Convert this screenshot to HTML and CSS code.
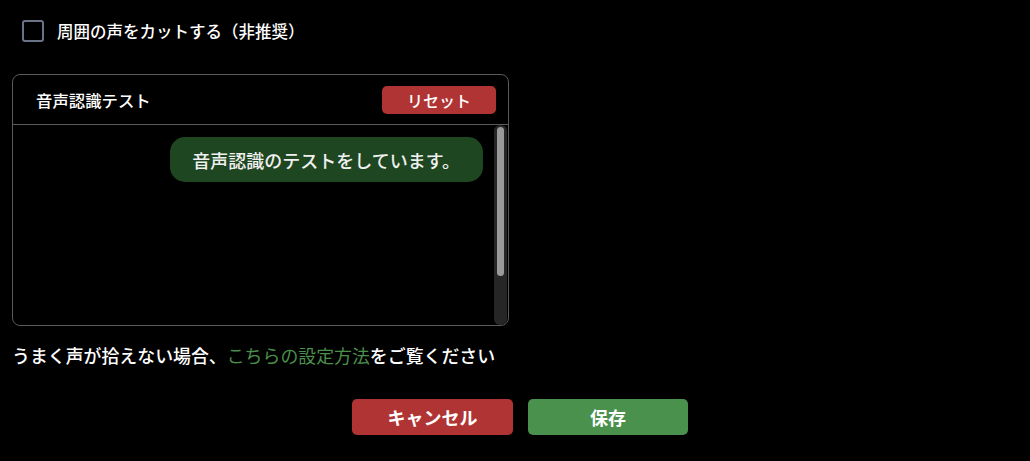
FILE: index.html
```html
<!DOCTYPE html>
<html lang="ja">
<head>
<meta charset="utf-8">
<link rel="stylesheet" href="styles.css">
</head>
<body>
<div class="page">
  <label class="check-row">
    <span class="checkbox"></span>
    <span class="check-label">周囲の声をカットする（非推奨）</span>
  </label>

  <section class="panel">
    <div class="panel-head">
      <span class="panel-title">音声認識テスト</span>
      <button class="btn-reset">リセット</button>
    </div>
    <div class="panel-body">
      <div class="messages">
        <div class="bubble">音声認識のテストをしています。</div>
      </div>
      <div class="scrollbar"><div class="thumb"></div></div>
    </div>
  </section>

  <p class="help">うまく声が拾えない場合、<a class="link">こちらの設定方法</a>をご覧ください</p>

  <div class="actions">
    <button class="btn btn-cancel">キャンセル</button>
    <button class="btn btn-save">保存</button>
  </div>
</div>
</body>
</html>
```

FILE: styles.css
```css
* { box-sizing: border-box; }
html, body {
  margin: 0;
  background: #000;
  color: #fff;
  font-family: "Noto Sans CJK JP", "Noto Sans", sans-serif;
}
.page {
  width: 1030px;
  height: 461px;
  padding: 19px 2px 0 12px;
}
.check-row {
  display: flex;
  align-items: center;
  gap: 13px;
  padding-left: 10px;
  height: 24px;
}
.checkbox {
  width: 22px;
  height: 22px;
  border: 2px solid #6b7388;
  border-radius: 3px;
}
.check-label {
  font-size: 16.5px;
  font-weight: 500;
  line-height: 24px;
}
.panel {
  margin-top: 31px;
  width: 497px;
  height: 252px;
  border: 1px solid #5a5a5a;
  border-radius: 8px;
  display: flex;
  flex-direction: column;
  overflow: hidden;
}
.panel-head {
  height: 50px;
  flex: none;
  display: flex;
  align-items: center;
  justify-content: space-between;
  padding: 0 12px 0 23px;
  border-bottom: 1px solid #5a5a5a;
}
.panel-title {
  font-size: 16.4px;
  font-weight: 500;
}
.btn-reset {
  width: 114px;
  height: 28px;
  border: none;
  border-radius: 5px;
  background: #b03434;
  color: #fff;
  font-family: inherit;
  font-size: 16px;
  font-weight: 500;
  padding: 0;
  margin-top: 1px;
}
.panel-body {
  flex: 1;
  display: flex;
}
.messages {
  flex: 1;
  display: flex;
  justify-content: flex-end;
  align-items: flex-start;
  padding: 12px 11px 0 0;
}
.bubble {
  background: #1e4620;
  border-radius: 15px;
  height: 45px;
  padding: 0 23px 0 22px;
  display: flex;
  align-items: center;
  font-size: 18px;
  font-weight: 500;
  color: #f0f0f0;
}
.scrollbar {
  width: 13px;
  margin: 0 1px 0 0;
  background: #262626;
  border-radius: 6px;
  padding: 2px 3px;
}
.thumb {
  height: 149px;
  background: #9a9a9a;
  border-radius: 4px;
}
.help {
  margin: 16px 0 0 0;
  font-size: 17.9px;
  font-weight: 500;
  line-height: 26px;
}
.link {
  color: #4a8f4c;
  font-weight: 400;
}
.actions {
  margin-top: 31px;
  display: flex;
  justify-content: center;
  gap: 15px;
}
.btn {
  width: 161px;
  height: 36px;
  border: none;
  border-radius: 5px;
  color: #fff;
  font-family: inherit;
  font-size: 18px;
  font-weight: 700;
  padding: 0;
}
.btn-cancel { background: #b03434; }
.btn-save { background: #4a914e; width: 160px; }
```
